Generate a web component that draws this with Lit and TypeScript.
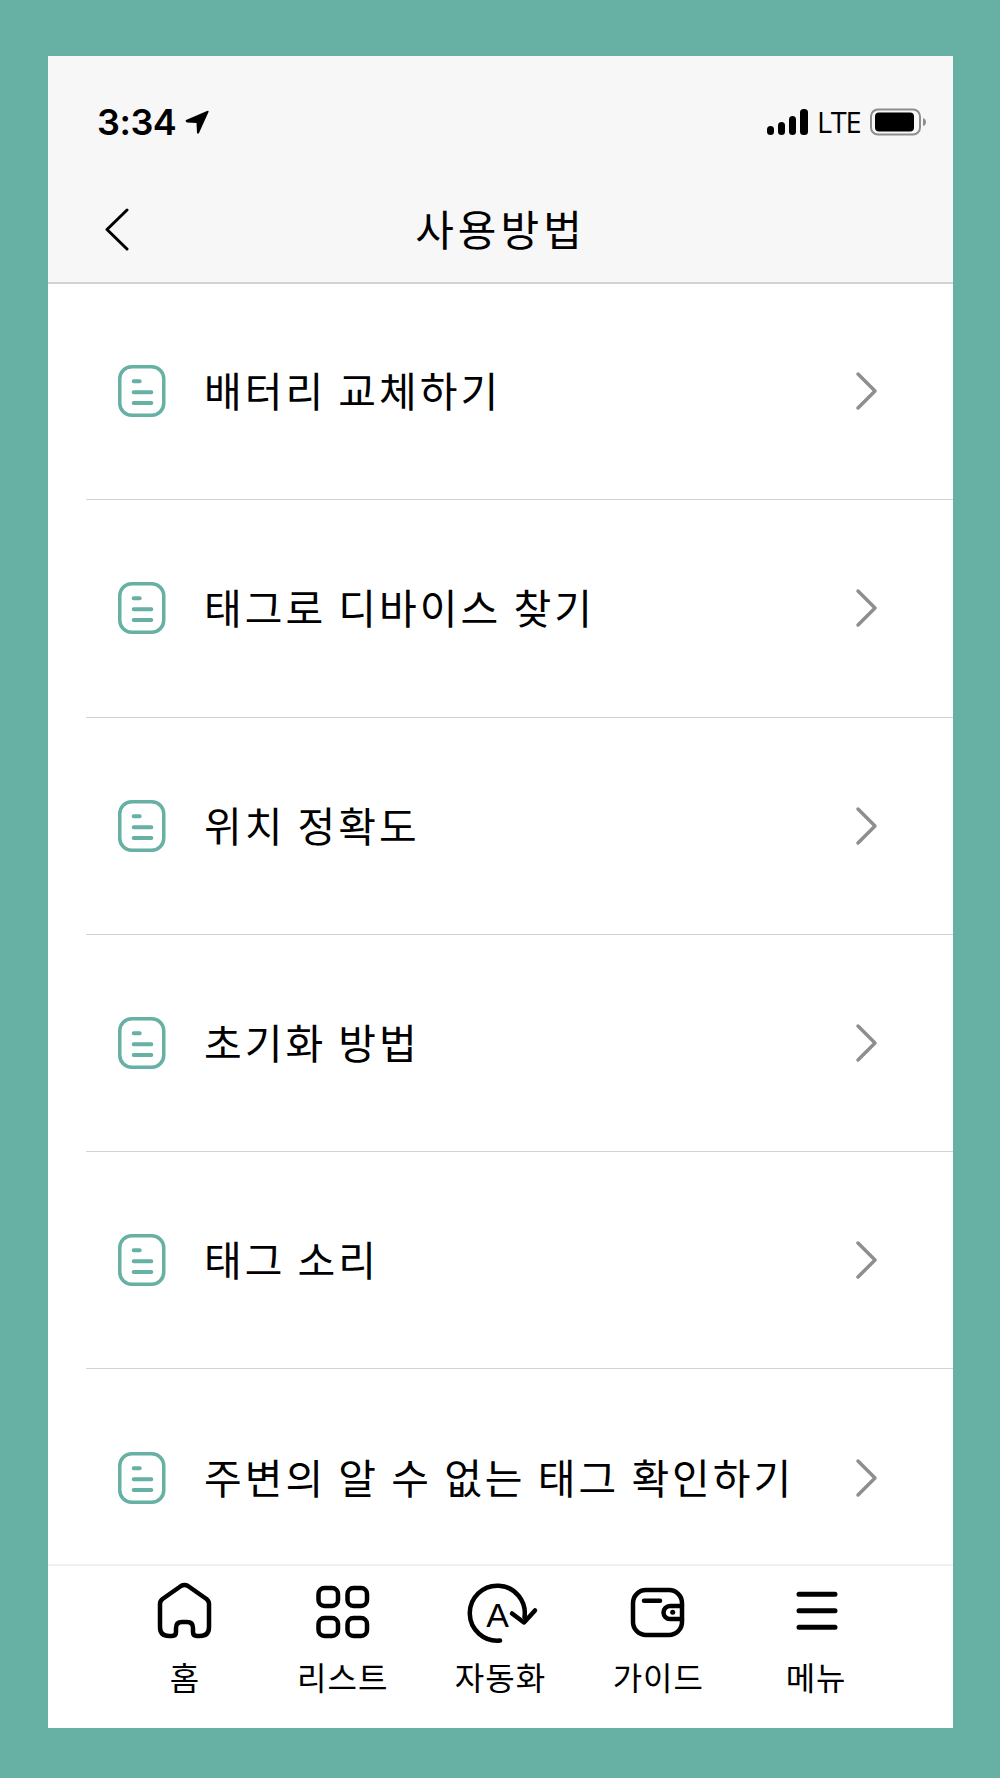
import { LitElement, html, css, svg } from 'lit';
import { customElement } from 'lit/decorators.js';

const items = [
  '배터리 교체하기',
  '태그로 디바이스 찾기',
  '위치 정확도',
  '초기화 방법',
  '태그 소리',
  '주변의 알 수 없는 태그 확인하기',
];

const tabs = [
  {
    label: '홈',
    icon: svg`<path d="M11 22q0-3 2.500-5L32 4q3.500-2 7 0l18.500 13q2.500 2 2.500 5v23q0 9-9 9h-3q-4 0-4-4v-4q0-6-6-6h-5q-6 0-6 6v4q0 4-4 4h-3q-9 0-9-9Z"/>`,
  },
  {
    label: '리스트',
    icon: svg`<rect x="11.500" y="6" width="19.500" height="18" rx="6"/><rect x="40.500" y="6" width="19.500" height="18" rx="6"/><rect x="11.500" y="36" width="19.500" height="18" rx="6"/><rect x="40.500" y="36" width="19.500" height="18" rx="6"/>`,
  },
  {
    label: '자동화',
    icon: svg`<path d="M36 58.500A27.500 27.500 0 1 1 60.500 35"/><path d="M48 31.500l12 9 11-12"/><text class="letter" x="34" y="44.500" text-anchor="middle">A</text>`,
  },
  {
    label: '가이드',
    icon: svg`<rect x="11" y="8" width="49" height="45" rx="13"/><path d="M22 18.700h16"/><path d="M60 24H48a6.500 6.500 0 0 0 0 13h12"/><circle class="dot" cx="50.700" cy="30.300" r="2.500"/>`,
  },
  {
    label: '메뉴',
    icon: svg`<path class="bars" d="M19 12.300h36M19 28.700h36M19 45.300h36"/>`,
  },
];

@customElement('app-root')
export default class AppRoot extends LitElement {
  static override styles = css`
    :host {
      display: block;
      height: 1778px;
      box-sizing: border-box;
      padding: 56px 47px 50px 48px;
      background: #66b0a4;
      font-family: 'Noto Sans CJK KR', 'Noto Sans', sans-serif;
      color: #000;
    }
    .screen {
      display: flex;
      flex-direction: column;
      height: 100%;
      background: #fff;
    }
    .header {
      height: 228px;
      flex: none;
      box-sizing: border-box;
      background: #f7f7f7;
      border-bottom: 2px solid #d2d2d2;
      display: flex;
      flex-direction: column;
    }
    .status {
      display: flex;
      align-items: center;
      justify-content: space-between;
      height: 30px;
      padding: 51px 27px 0 49px;
    }
    .status__left,
    .status__right {
      display: flex;
      align-items: center;
    }
    .time {
      font-family: Inter, sans-serif;
      font-weight: 600;
      font-size: 36px;
      line-height: 30px;
      letter-spacing: -0.5px;
    }
    .arrow {
      width: 24px;
      height: 24px;
      margin-left: 9px;
    }
    .lte {
      font-family: 'Open Sans', sans-serif;
      font-size: 29px;
      line-height: 30px;
      letter-spacing: -1.300px;
      margin: 0 9.700px 0 8.300px;
    }
    .nav {
      position: relative;
      flex: 1;
      display: flex;
      align-items: center;
      justify-content: center;
      padding-top: 36px;
    }
    .nav h1 {
      margin: 0;
      font-size: 42px;
      line-height: 60px;
      font-weight: 400;
      letter-spacing: 4px;
    }
    .back {
      position: absolute;
      left: 56px;
      top: 71px;
      width: 26px;
      height: 44px;
    }
    .list {
      flex: 1;
      margin: -1px 0 0;
      padding: 0 0 0 38px;
      list-style: none;
      overflow: hidden;
    }
    .row {
      display: flex;
      align-items: center;
      height: 216.300px;
      border-bottom: 1px solid #d2d2d2;
    }
    .row:last-child {
      border-bottom: 0;
    }
    .doc {
      width: 48px;
      height: 52px;
      flex: none;
      margin-left: 32px;
    }
    .label {
      flex: 1;
      margin-left: 38px;
      padding-bottom: 4px;
      font-size: 41px;
      letter-spacing: 3px;
      white-space: nowrap;
    }
    .chev {
      width: 24px;
      height: 40px;
      flex: none;
      margin-right: 74px;
    }
    .tabs {
      flex: none;
      height: 164px;
      box-sizing: border-box;
      border-top: 2px solid #f0f0f0;
      padding: 0 58px;
      display: grid;
      grid-template-columns: repeat(5, 1fr);
    }
    .tab {
      display: flex;
      flex-direction: column;
      align-items: center;
      font-size: 32px;
      line-height: 40px;
      letter-spacing: 1px;
      padding-top: 16px;
    }
    .tab svg {
      width: 72px;
      height: 64px;
      margin-bottom: 10px;
      overflow: visible;
      fill: none;
      stroke: #000;
      stroke-width: 4.500;
      stroke-linecap: round;
      stroke-linejoin: round;
    }
    .tab .letter {
      font-family: 'Liberation Sans', sans-serif;
      font-size: 34px;
      fill: #000;
      stroke: none;
    }
    .tab .dot {
      fill: #000;
      stroke: none;
    }
    .tab .bars {
      stroke-width: 5;
    }
  `;

  override render() {
    return html`
      <div class="screen">
        <header class="header">
          <div class="status">
            <div class="status__left">
              <span class="time">3:34</span>
              <svg class="arrow" viewBox="0 0 24 24"><path d="M1 10 22 1q2-1 1.500 1L14 23q-1 1.500-2 0l-.5-10L2 12.500q-2-1-1-2.500Z" fill="#000"/></svg>
            </div>
            <div class="status__right">
              <svg width="42" height="28" viewBox="0 0 42 28" fill="#000">
                <rect x="0" y="18" width="7" height="9" rx="3.500"/>
                <rect x="11" y="14" width="7" height="13" rx="3.500"/>
                <rect x="22" y="8" width="7" height="19" rx="3.500"/>
                <rect x="33" y="1" width="8" height="26" rx="3.500"/>
              </svg>
              <span class="lte">LTE</span>
              <svg width="56" height="28" viewBox="0 0 56 28">
                <rect x="1" y="1.500" width="49" height="25" rx="7" fill="none" stroke="#8e8e8e" stroke-width="2"/>
                <rect x="5" y="4.500" width="39" height="19" rx="4" fill="#000"/>
                <path d="M53 10q3 1 3 4t-3 4Z" fill="#8e8e8e"/>
              </svg>
            </div>
          </div>
          <div class="nav">
            <svg class="back" viewBox="0 0 26 44" fill="none" stroke="#000" stroke-width="3" stroke-linecap="round" stroke-linejoin="round"><path d="M23 2 3 21.500 23 41"/></svg>
            <h1>사용방법</h1>
          </div>
        </header>
        <ul class="list">
          ${items.map(
            (item) => html`
              <li class="row">
                <svg class="doc" viewBox="0 0 48 52" fill="none" stroke="#66b0a4" stroke-linecap="round">
                  <rect x="1.750" y="1.750" width="44" height="48.500" rx="12" stroke-width="3.500"/>
                  <path d="M15.700 16.300h6M15.700 27.300h17.600M15.700 38h17.600" stroke-width="4"/>
                </svg>
                <span class="label">${item}</span>
                <svg class="chev" viewBox="0 0 24 40" fill="none" stroke="#8e8e8e" stroke-width="3.500" stroke-linecap="round" stroke-linejoin="round"><path d="M3 3l17 17-17 17"/></svg>
              </li>
            `,
          )}
        </ul>
        <nav class="tabs">
          ${tabs.map(
            (tab) => html`
              <div class="tab">
                <svg viewBox="0 0 72 64">${tab.icon}</svg>
                <span>${tab.label}</span>
              </div>
            `,
          )}
        </nav>
      </div>
    `;
  }
}
